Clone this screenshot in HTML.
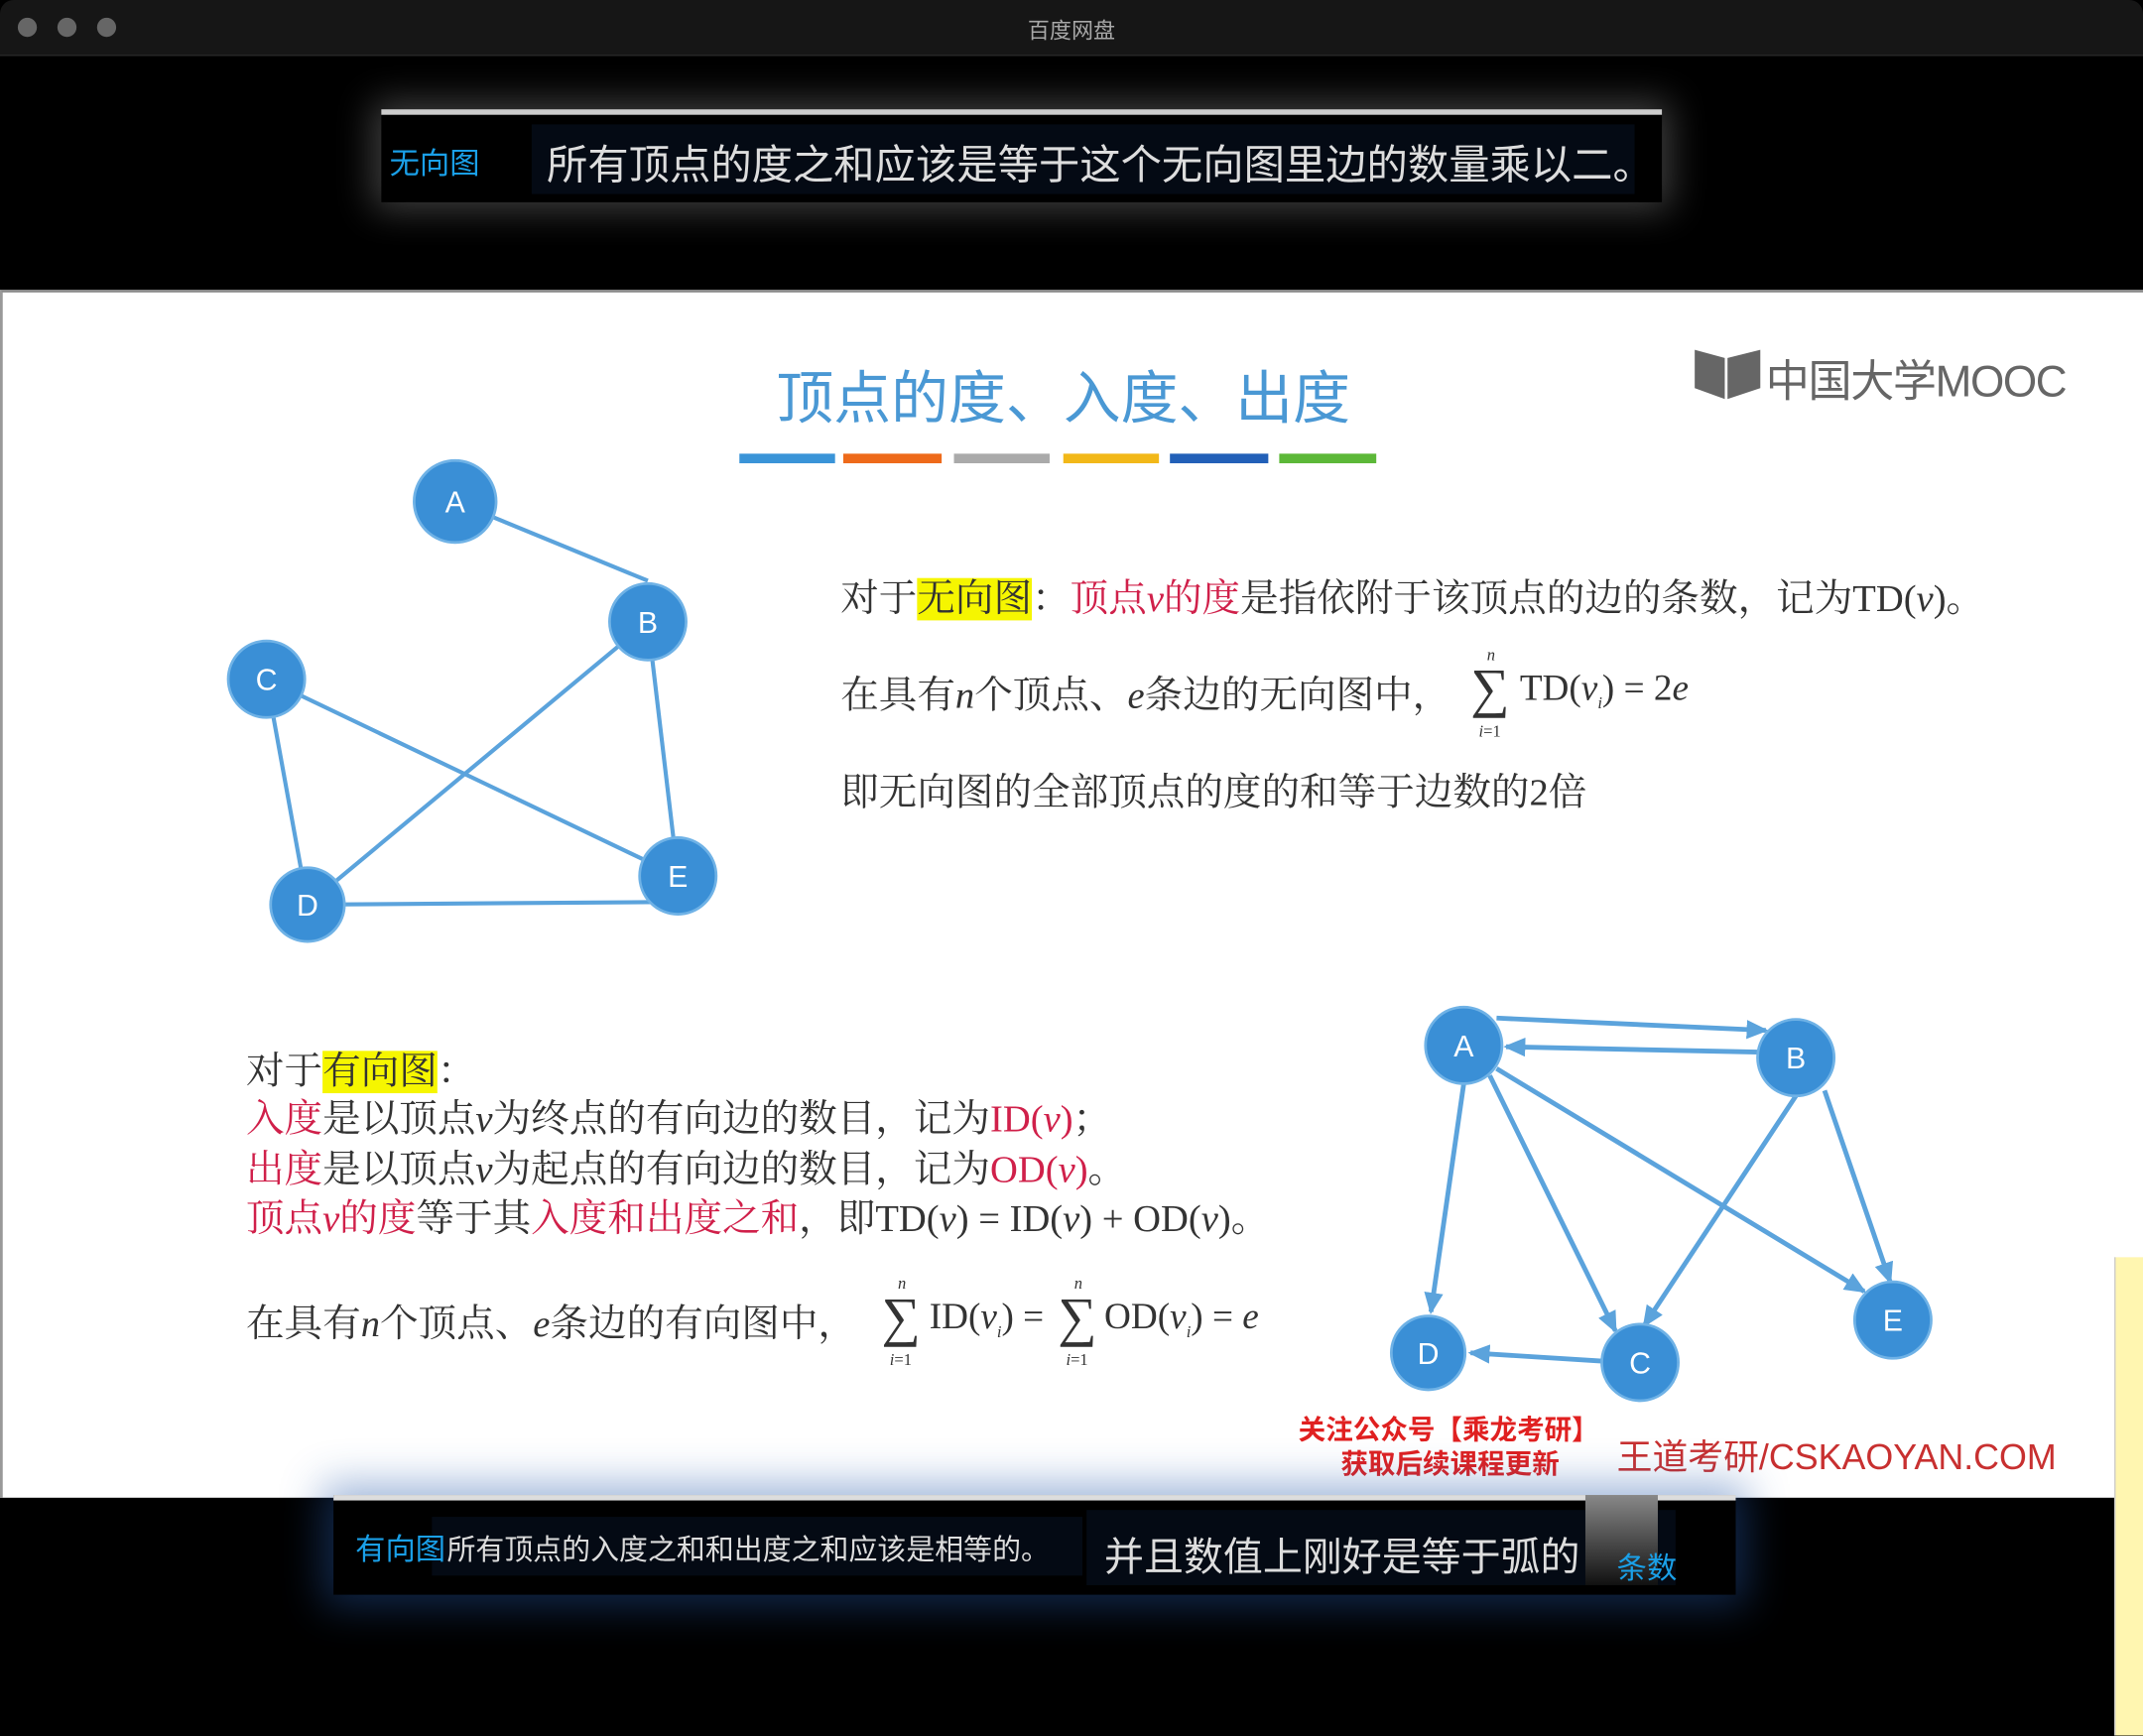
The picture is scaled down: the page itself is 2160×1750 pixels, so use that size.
<!DOCTYPE html>
<html><head><meta charset="utf-8"><style>
html,body{margin:0;padding:0;width:2160px;height:1750px;overflow:hidden;background:#000}
#s{position:absolute;left:0;top:0;width:1568px;height:1270px;transform:scale(1.37755);transform-origin:0 0;font-family:"Liberation Sans","Noto Sans CJK SC",sans-serif}
.a{position:absolute;white-space:nowrap}
.cn{font-family:"Liberation Serif","Noto Serif CJK SC",serif;color:#333}
.r{color:#d0204a}
.hl{background:#f6f600}
</style></head><body><div id="s">
<div class="a" style="left:0;top:0;width:1568px;height:40px;background:#161616;border-bottom:1px solid #2a2a2a;border-radius:10px 10px 0 0"></div>
<div class="a" style="left:13px;top:13px;width:14px;height:14px;border-radius:50%;background:#666"></div>
<div class="a" style="left:42px;top:13px;width:14px;height:14px;border-radius:50%;background:#666"></div>
<div class="a" style="left:71px;top:13px;width:14px;height:14px;border-radius:50%;background:#666"></div>
<div class="a" style="left:0;width:1568px;top:9px;text-align:center;color:#a8a8a8;font-size:16px">百度网盘</div>

<div class="a" style="left:279px;top:80px;width:937px;height:64px;background:#000;box-shadow:0 0 25px 6px rgba(180,180,180,.35);border-top:4px solid #ccc"></div>
<div class="a" style="left:389px;top:91px;width:807px;height:51px;background:#040a14"></div>
<div class="a" style="left:285px;top:102px;color:#1aa0e8;font-size:22px">无向图</div>
<div class="a" style="left:400px;top:96px;color:#ddd;font-size:30px">所有顶点的度之和应该是等于这个无向图里边的数量乘以二。</div>

<div class="a" style="left:0;top:212px;width:1566px;height:882px;background:#fff;border-left:2px solid #999;border-top:2px solid #888"></div>
<div class="a" style="left:0;width:1556px;top:258px;text-align:center;color:#4a98d4;font-size:42px;font-family:'Liberation Sans','Noto Sans CJK SC',sans-serif">顶点的度、入度、出度</div>
<div class="a" style="left:541px;top:332px;width:70px;height:7px;background:#3a94d8"></div>
<div class="a" style="left:617px;top:332px;width:72px;height:7px;background:#ee6a1a"></div>
<div class="a" style="left:698px;top:332px;width:70px;height:7px;background:#aaa"></div>
<div class="a" style="left:778px;top:332px;width:70px;height:7px;background:#f2b818"></div>
<div class="a" style="left:856px;top:332px;width:72px;height:7px;background:#2260b8"></div>
<div class="a" style="left:936px;top:332px;width:71px;height:7px;background:#5cb838"></div>
<svg class="a" style="left:1238px;top:252px" width="52" height="42"><path d="M2 4 L24 10 L24 40 L2 32Z M26 10 L50 4 L50 32 L26 40Z" fill="#666"/></svg>
<div class="a" style="left:1292px;top:254px;color:#666;font-size:32px;letter-spacing:-1px">中国大学MOOC</div>

<svg class="a" style="left:0;top:0" width="1568" height="1270">
<g stroke="#5ba3dc" stroke-width="3">
<line x1="333" y1="367" x2="474" y2="425"/><line x1="474" y1="455" x2="496" y2="641"/><line x1="474" y1="455" x2="225" y2="662"/><line x1="195" y1="497" x2="496" y2="641"/><line x1="195" y1="497" x2="225" y2="662"/><line x1="225" y1="662" x2="496" y2="660"/>
</g>
<defs><marker id="m" markerUnits="userSpaceOnUse" markerWidth="16" markerHeight="14" refX="14" refY="7" orient="auto"><path d="M0 0 L16 7 L0 14Z" fill="#5ba3dc"/></marker></defs>
<g stroke="#5ba3dc" stroke-width="3.5" marker-end="url(#m)">
<line x1="1095" y1="745" x2="1292" y2="754"/>
<line x1="1290" y1="770" x2="1102" y2="766"/>
<line x1="1071" y1="793" x2="1047" y2="960"/>
<line x1="1090" y1="787" x2="1182" y2="974"/>
<line x1="1095" y1="782" x2="1364" y2="945"/>
<line x1="1314" y1="802" x2="1203" y2="970"/>
<line x1="1335" y1="798" x2="1383" y2="938"/>
<line x1="1172" y1="996" x2="1076" y2="990"/>
</g>
<g fill="#3a8fd6" stroke="#6fb2e6" stroke-width="2">
<circle cx="333" cy="367" r="30"/><circle cx="474" cy="455" r="28"/><circle cx="195" cy="497" r="28"/><circle cx="225" cy="662" r="27"/><circle cx="496" cy="641" r="28"/>
<circle cx="1071" cy="765" r="28"/><circle cx="1314" cy="774" r="28"/><circle cx="1045" cy="990" r="27"/><circle cx="1200" cy="997" r="28"/><circle cx="1385" cy="966" r="28"/>
</g>
<g fill="#fff" font-size="22" text-anchor="middle" font-family="Liberation Sans,sans-serif">
<text x="333" y="375">A</text><text x="474" y="463">B</text><text x="195" y="505">C</text><text x="225" y="670">D</text><text x="496" y="649">E</text>
<text x="1071" y="773">A</text><text x="1314" y="782">B</text><text x="1045" y="998">D</text><text x="1200" y="1005">C</text><text x="1385" y="974">E</text>
</g>
</svg>

<div class="a cn" style="left:615px;top:416px;font-size:28px">对于<span class="hl">无向图</span>：<span class="r">顶点<i>v</i>的度</span>是指依附于该顶点的边的条数，记为TD(<i>v</i>)。</div>
<div class="a cn" style="left:615px;top:487px;font-size:28px">在具有<i>n</i>个顶点、<i>e</i>条边的无向图中，</div>
<div class="a cn" style="left:1076px;top:480px;font-size:40px">∑</div>
<div class="a cn" style="left:1088px;top:472px;font-size:12px"><i>n</i></div>
<div class="a cn" style="left:1082px;top:528px;font-size:12px"><i>i</i>=1</div>
<div class="a cn" style="left:1112px;top:488px;font-size:27px">TD(<i>v</i><sub style="font-size:12px"><i>i</i></sub>) = 2<i>e</i></div>
<div class="a cn" style="left:615px;top:558px;font-size:28px">即无向图的全部顶点的度的和等于边数的2倍</div>

<div class="a cn" style="left:180px;top:762px;font-size:28px">对于<span class="hl">有向图</span>：</div>
<div class="a cn" style="left:180px;top:797px;font-size:28px"><span class="r">入度</span>是以顶点<i>v</i>为终点的有向边的数目，记为<span class="r">ID(<i>v</i>)</span>；</div>
<div class="a cn" style="left:180px;top:834px;font-size:28px"><span class="r">出度</span>是以顶点<i>v</i>为起点的有向边的数目，记为<span class="r">OD(<i>v</i>)</span>。</div>
<div class="a cn" style="left:180px;top:870px;font-size:28px"><span class="r">顶点<i>v</i>的度</span>等于其<span class="r">入度和出度之和</span>，即TD(<i>v</i>) = ID(<i>v</i>) + OD(<i>v</i>)。</div>
<div class="a cn" style="left:180px;top:947px;font-size:28px">在具有<i>n</i>个顶点、<i>e</i>条边的有向图中，</div>
<div class="a cn" style="left:645px;top:940px;font-size:40px">∑</div>
<div class="a cn" style="left:657px;top:932px;font-size:12px"><i>n</i></div>
<div class="a cn" style="left:651px;top:988px;font-size:12px"><i>i</i>=1</div>
<div class="a cn" style="left:680px;top:948px;font-size:27px">ID(<i>v</i><sub style="font-size:12px"><i>i</i></sub>) =</div>
<div class="a cn" style="left:774px;top:940px;font-size:40px">∑</div>
<div class="a cn" style="left:786px;top:932px;font-size:12px"><i>n</i></div>
<div class="a cn" style="left:780px;top:988px;font-size:12px"><i>i</i>=1</div>
<div class="a cn" style="left:808px;top:948px;font-size:27px">OD(<i>v</i><sub style="font-size:12px"><i>i</i></sub>) = <i>e</i></div>

<div class="a" style="left:950px;top:1030px;color:#e02020;font-size:20px;font-weight:bold">关注公众号【乘龙考研】</div>
<div class="a" style="left:981px;top:1055px;color:#e02020;font-size:20px;font-weight:bold">获取后续课程更新</div>
<div class="a" style="left:1183px;top:1046px;color:#c83030;font-size:26px">王道考研/CSKAOYAN.COM</div>

<div class="a" style="left:1547px;top:920px;width:21px;height:350px;background:#fff6b0;border-left:1px solid #ccc"></div>

<div class="a" style="left:244px;top:1094px;width:1026px;height:69px;background:#000;box-shadow:0 0 30px 8px rgba(40,90,170,.45);border-top:4px solid #ddd"></div>
<div class="a" style="left:316px;top:1110px;width:476px;height:43px;background:#040a14"></div>
<div class="a" style="left:795px;top:1105px;width:431px;height:55px;background:#040a14"></div>
<div class="a" style="left:1160px;top:1094px;width:53px;height:66px;background:linear-gradient(#888,#111)"></div>
<div class="a" style="left:260px;top:1116px;color:#1aa0e8;font-size:22px">有向图</div>
<div class="a" style="left:327px;top:1118px;color:#ddd;font-size:21px">所有顶点的入度之和和出度之和应该是相等的。</div>
<div class="a" style="left:808px;top:1116px;color:#ddd;font-size:29px">并且数值上刚好是等于弧的</div>
<div class="a" style="left:1183px;top:1130px;color:#1aa0e8;font-size:22px">条数</div>
</div></body></html>
